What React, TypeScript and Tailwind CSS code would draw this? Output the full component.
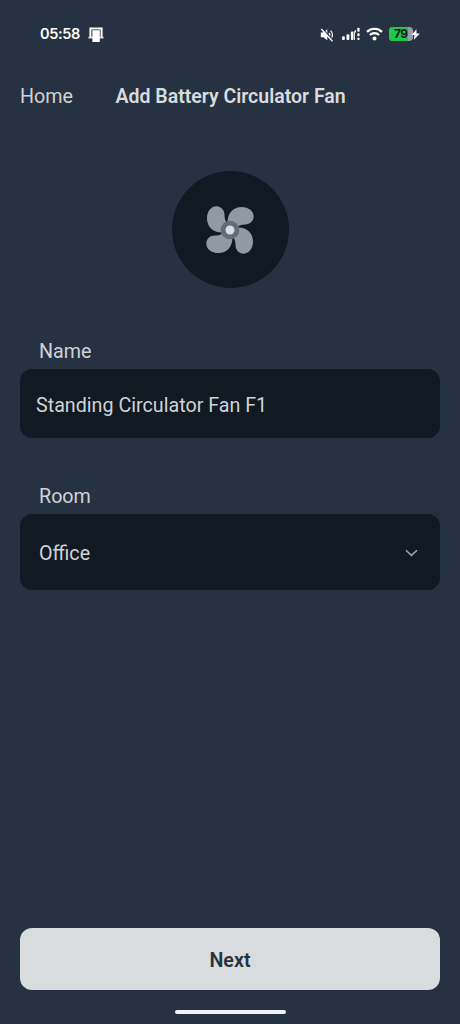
import React, { useState } from 'react';

const BLADE =
  'M-7 -20 C-9 -50 10 -69 34 -69 C57 -69 71 -56 71 -41 C71 -27 60 -16.5 46 -16.5 C36 -16.5 26 -15 16 -5 L0 0 Z';

function FanIcon() {
  return (
    <svg className="size-[50px]" viewBox="-75 -75 150 150">
      {[0, 90, 180, 270].map((angle) => (
        <path key={angle} d={BLADE} fill="#8f9aa5" transform={`rotate(${angle})`} />
      ))}
      <circle r="28" fill="#626c77" />
      <circle r="13.5" fill="#d8dcde" />
    </svg>
  );
}

function StatusBar() {
  return (
    <div className="flex h-[68px] items-center pl-10 pr-10 text-white">
      <span className="w-10 whitespace-nowrap font-['Inter',sans-serif] text-[14.5px] font-semibold leading-5 tracking-[-0.35px]">
        05:58
      </span>
      <svg className="ml-2 mt-0.5 h-[16px] w-[16px]" viewBox="0 0 16 16" fill="none">
        <path d="M2.4 10V1.4h11.2V10" stroke="#fff" strokeWidth="2" />
        <path d="M0.4 10.6h15.2" stroke="#dfe2e5" strokeWidth="1.7" />
        <path d="M4.4 3h7.4v12H4.4z" fill="#fff" />
        <path d="M4.2 3h7.6" stroke="#7c848e" strokeWidth="0.8" />
      </svg>
      <div className="ml-auto flex items-center">
        <svg className="mt-0.5 h-[14px] w-[14px]" viewBox="0 0 14 14" fill="none">
          <path d="M0.8 4.6h2.4L7.3 1.2v11L3.4 9.2H0.8z" fill="#fff" />
          <path d="M9 4.8c1 1.2 1 3 0 4.2M10.6 2.6c2.4 2.2 2.4 6 .3 8.2" stroke="#fff" strokeWidth="1.2" />
          <path d="M2.3 0.4l11 12" stroke="#263241" strokeWidth="1.1" />
          <path d="M1.3 1l11.2 12.2" stroke="#fff" strokeWidth="1.3" />
        </svg>
        <svg className="ml-2 h-[14px] w-[18px]" viewBox="0 0 18 14" fill="#fff">
          <rect x="0" y="9.2" width="2.8" height="3.8" rx="1" />
          <rect x="4.5" y="7.3" width="2.8" height="5.7" rx="1" />
          <rect x="8.9" y="4.5" width="2.6" height="8.5" rx="1" />
          <path d="M12.2 4.2l1.8-1.5v2.2l-1 1v7.1h-.9z" />
          <rect x="15.3" y="0.7" width="2.3" height="4" rx="0.7" />
          <rect x="15.3" y="6.2" width="2.3" height="3" rx="0.7" />
          <rect x="15.3" y="10.7" width="2.3" height="2.3" rx="0.8" />
        </svg>
        <svg className="ml-1.5 h-[14px] w-[17px]" viewBox="0 0 17 14" fill="none">
          <path d="M1 4.9c4.2-4.2 10.8-4.2 15 0" stroke="#fff" strokeWidth="2.2" />
          <path d="M3.9 8c2.6-2.5 6.6-2.5 9.2 0" stroke="#fff" strokeWidth="2.2" />
          <circle cx="8.5" cy="11.4" r="2" fill="#fff" />
        </svg>
        <div className="relative ml-1.5 h-[14px] w-[31px]">
          <div className="flex h-[14px] w-[24px] overflow-hidden rounded-[4px] bg-[#9a9fa7]">
            <div className="w-[19px] bg-[#1fc84a]" />
          </div>
          <span className="absolute left-[5px] top-0 font-['Inter',sans-serif] text-[12px] font-bold leading-[14px] tracking-[-0.5px] text-[#101820]">
            79
          </span>
          <svg className="absolute left-[22px] top-[2px] h-[11px] w-[9px]" viewBox="0 0 9 11">
            <path d="M5.4 0.2L0.4 6h3L2.9 10.8l5.9-6.4H5.5z" fill="#fff" />
          </svg>
        </div>
      </div>
    </div>
  );
}

export default function App() {
  const [name, setName] = useState('Standing Circulator Fan F1');

  return (
    <div className="flex h-screen w-full flex-col bg-[#263241] font-['Roboto',sans-serif] text-[19.7px] text-[#d0d3d5]">
      <StatusBar />
      <header className="flex h-14 items-center px-5 pt-0.5">
        <button>Home</button>
        <h1 className="ml-[42.5px] whitespace-nowrap text-[19.5px] font-semibold text-[#d8dcde]">
          Add Battery Circulator Fan
        </h1>
      </header>

      <main className="flex flex-1 flex-col px-5">
        <div className="mt-[47px] flex size-[117px] items-center justify-center self-center rounded-full bg-[#111923]">
          <FanIcon />
        </div>

        <label className="mt-[50px] pl-[19px] leading-7" htmlFor="name">
          Name
        </label>
        <input
          id="name"
          className="mt-[3px] h-[69px] rounded-xl bg-[#111923] px-4 pt-1 outline-none"
          value={name}
          onChange={(e) => setName(e.target.value)}
        />

        <span className="mt-[45px] pl-[19px] leading-7">Room</span>
        <button className="mt-[3px] flex h-[76px] items-center justify-between rounded-xl bg-[#111923] pl-[19px] pr-[22px]">
          <span className="pt-1">Office</span>
          <svg className="mt-0.5 h-[8px] w-[13px]" viewBox="0 0 13 8" fill="none">
            <path d="M1 1.2l5.5 5.2L12 1.2" stroke="#a2a6ac" strokeWidth="1.5" />
          </svg>
        </button>
      </main>

      <footer className="flex flex-col items-center px-5 pb-[10px]">
        <button className="h-[62px] w-full rounded-xl bg-[#d8dcde] pt-1 font-semibold text-[#263241]">
          Next
        </button>
        <div className="mt-5 h-1 w-[111px] rounded-full bg-[#f1f2f4]" />
      </footer>
    </div>
  );
}
